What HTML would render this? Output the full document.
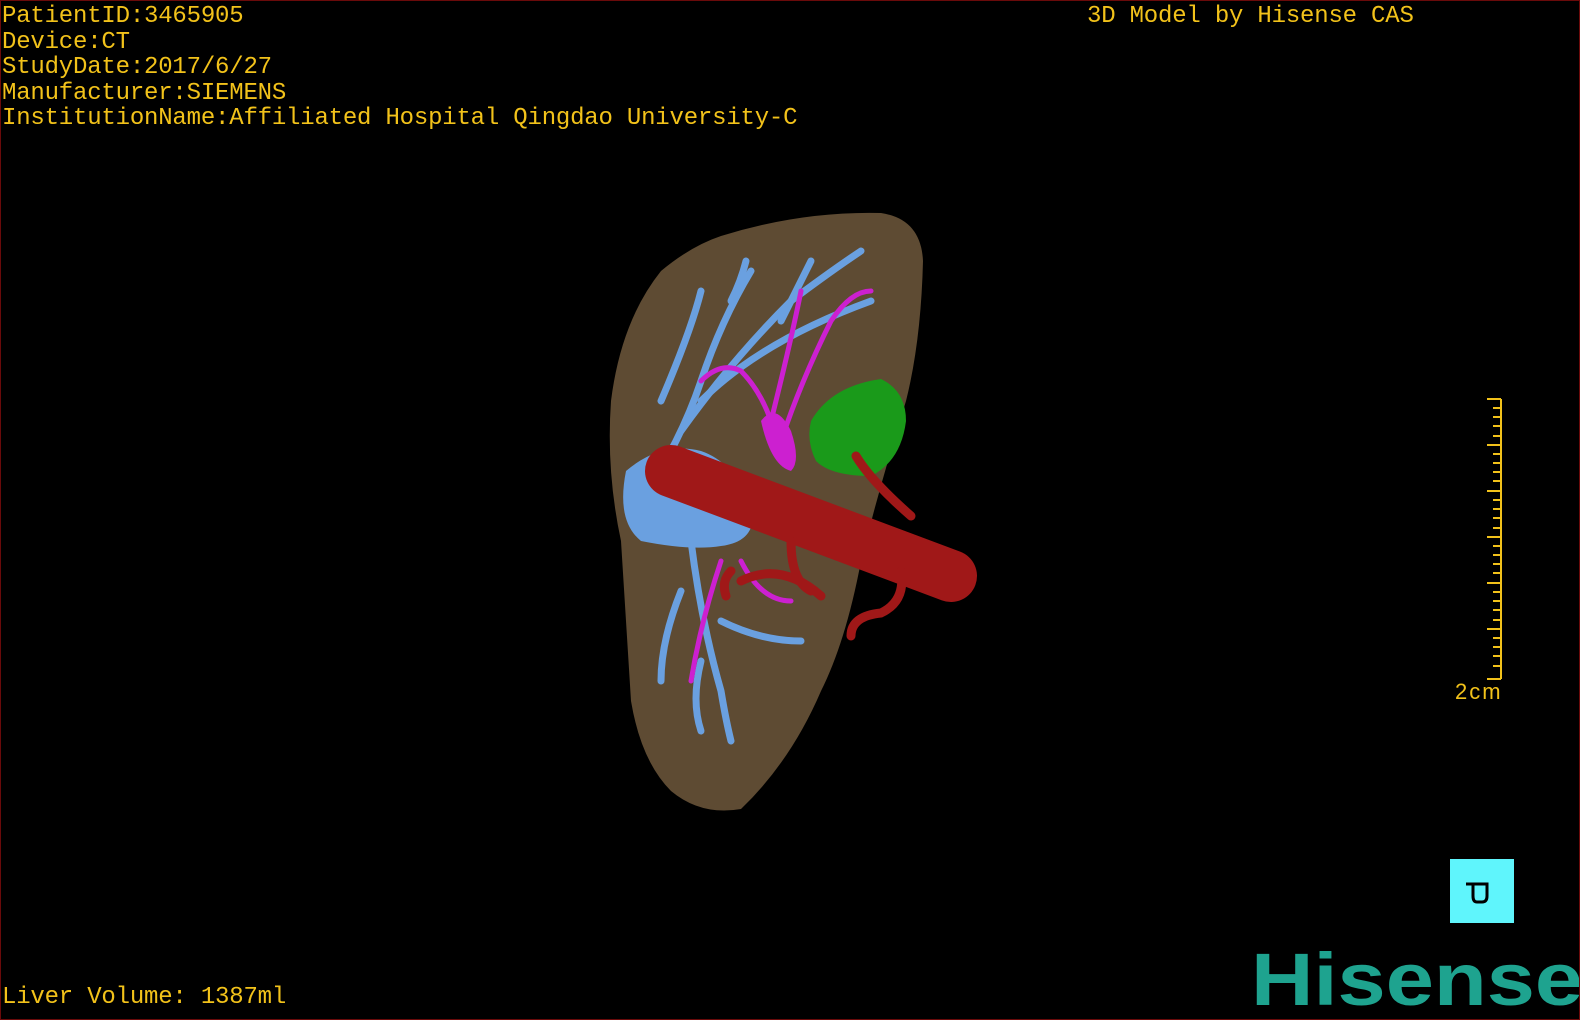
<!DOCTYPE html>
<html><head><meta charset="utf-8"><style>
html,body{margin:0;padding:0;background:#000;}
#c{position:relative;width:1580px;height:1020px;background:#000;overflow:hidden;box-sizing:border-box;border:1px solid #6a0a0a;}
.t{position:absolute;color:#f2c21a;font-family:"Liberation Mono",monospace;font-size:24px;line-height:25.5px;white-space:pre;letter-spacing:-0.2px;}
</style></head><body><div id="c">
<div class="t" style="left:1px;top:3px">PatientID:3465905
Device:CT
StudyDate:2017/6/27
Manufacturer:SIEMENS
InstitutionName:Affiliated Hospital Qingdao University-C</div>
<div class="t" style="left:1086px;top:3px">3D Model by Hisense CAS</div>
<div class="t" style="left:1px;top:984px">Liver Volume: 1387ml</div>
<div class="t" style="left:1454px;top:678px;font-family:'Liberation Sans',sans-serif;font-size:22px;letter-spacing:2px">2cm</div>
<svg style="position:absolute;left:0;top:0" width="1580" height="1020">
<g stroke="#f2c21a" stroke-width="2">
<line x1="1500" y1="398" x2="1500" y2="678"/>
<line x1="1486" y1="398" x2="1500" y2="398"/>
<line x1="1486" y1="444" x2="1500" y2="444"/>
<line x1="1486" y1="490" x2="1500" y2="490"/>
<line x1="1486" y1="536" x2="1500" y2="536"/>
<line x1="1486" y1="582" x2="1500" y2="582"/>
<line x1="1486" y1="628" x2="1500" y2="628"/>
<line x1="1486" y1="678" x2="1500" y2="678"/>
</g>
<g stroke="#f2c21a" stroke-width="2">
<path d="M1492 407h8M1492 416h8M1492 425h8M1492 435h8M1492 453h8M1492 462h8M1492 471h8M1492 480h8M1492 499h8M1492 508h8M1492 517h8M1492 527h8M1492 545h8M1492 554h8M1492 563h8M1492 572h8M1492 591h8M1492 600h8M1492 609h8M1492 619h8M1492 637h8M1492 646h8M1492 655h8M1492 665h8"/>
</g>
<rect x="1449" y="858" width="64" height="64" fill="#5ff5fc"/>
<path d="M1465 883h21v12q0 6-5 6h-5q-4 0-4-6v-12" fill="none" stroke="#000" stroke-width="3"/>
<text x="1250" y="1004" font-family="Liberation Sans,sans-serif" font-weight="bold" font-size="74" fill="#1ea38f" textLength="332" lengthAdjust="spacingAndGlyphs">Hisense</text>
<!-- liver -->
<path d="M720 235 Q800 210 880 212 Q920 218 922 260 Q920 340 905 400 Q880 480 860 560 Q845 640 820 690 Q790 760 740 808 Q700 815 670 790 Q640 760 630 700 Q625 620 620 540 Q605 470 610 400 Q620 320 660 270 Q690 245 720 235Z" fill="#5e4b33"/>
<g fill="none" stroke="#6aa0e0" stroke-width="7" stroke-linecap="round">
<path d="M640 500 Q680 440 700 380 Q720 320 750 270"/>
<path d="M680 430 Q730 360 790 300 Q830 270 860 250"/>
<path d="M700 400 Q760 340 870 300"/>
<path d="M660 400 Q690 330 700 290"/>
<path d="M690 540 Q700 620 720 690 Q725 720 730 740"/>
<path d="M680 590 Q660 640 660 680"/>
<path d="M720 620 Q760 640 800 640"/>
<path d="M700 660 Q690 700 700 730"/>
<path d="M730 300 Q740 280 745 260"/>
<path d="M780 320 Q800 280 810 260"/>
</g>
<path d="M625 470 Q660 440 700 450 Q730 460 750 500 Q760 540 720 545 Q690 550 640 540 Q615 520 625 470Z" fill="#6aa0e0"/>
<g fill="none" stroke="#cc20d0" stroke-width="5" stroke-linecap="round">
<path d="M780 460 Q770 400 740 370 Q720 360 700 380"/>
<path d="M780 440 Q800 380 830 320 Q850 290 870 290"/>
<path d="M770 420 Q790 340 800 290"/>
<path d="M720 560 Q700 620 690 680"/>
<path d="M740 560 Q760 600 790 600"/>
</g>
<path d="M760 420 Q775 400 790 430 Q800 460 790 470 Q770 465 760 420Z" fill="#cc20d0"/>
<path d="M810 420 Q830 385 880 378 Q905 390 905 420 Q900 460 870 475 Q830 475 815 460 Q805 440 810 420Z" fill="#1a9a1a"/>
<g fill="none" stroke="#a01818" stroke-linecap="round">
<path d="M670 470 L950 575" stroke-width="52"/>
<path d="M855 455 Q870 480 910 515" stroke-width="9"/>
<path d="M740 580 Q780 560 820 595" stroke-width="9"/>
<path d="M790 540 Q790 580 810 590" stroke-width="9"/>
<path d="M900 570 Q905 600 880 612 Q850 615 850 635" stroke-width="9"/>
<path d="M730 570 Q720 580 725 595" stroke-width="9"/>
</g>
</svg>
</div></body></html>
